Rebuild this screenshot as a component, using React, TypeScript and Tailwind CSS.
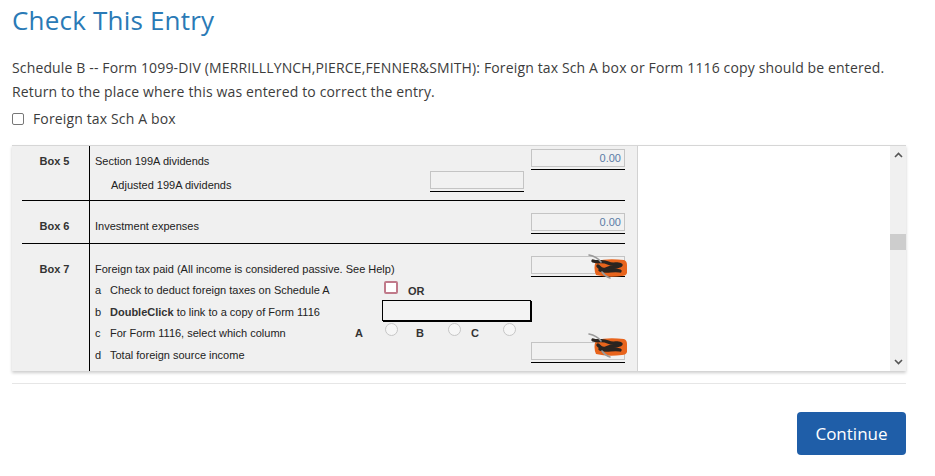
import React from 'react';

const Field: React.FC<{ w?: string; value?: string; children?: React.ReactNode }> = ({ w = 'w-[94px]', value, children }) => (
    <div className={`relative flex flex-col ${w}`}>
        <div className="h-[18px] border border-[#c4c4c4] bg-[#f1f1f1] flex items-center justify-end pr-[3px] text-[11px] text-[#5a7ca6]">
            {value}
        </div>
        <div className="mt-[2px] h-px bg-black" />
        {children}
    </div>
);

// redaction blob drawn over the amount
const Scribble: React.FC<{ top: string }> = ({ top }) => (
    <svg className={`absolute right-[-3px] ${top} w-[40px] h-[26px]`} viewBox="0 0 40 26">
        <path d="M8 7 Q20 4 36 6 Q39 7 39 11 L39 19 Q38 22 34 22 Q20 24 8 21 Q5 14 8 7 Z" fill="#e8641c" />
        <path d="M5 7 C10 9 14 6 20 9 C26 12 30 8 33 11 C30 14 24 12 18 15 C14 17 12 14 10 12 M12 16 C18 19 26 15 32 17" fill="none" stroke="#2a2420" strokeWidth="3.4" strokeLinecap="round" strokeLinejoin="round" />
        <path d="M1 1 C6 2 10 4 13 8 M14 18 C16 21 19 23 22 24" fill="none" stroke="#9a9a9a" strokeWidth="1.6" strokeLinecap="round" />
    </svg>
);

const Radio: React.FC = () => (
    <span className="block w-[13px] h-[13px] rounded-full border border-[#c6c6c6] bg-[#f6f6f6]" />
);

const ChevronUp: React.FC = () => (
    <svg className="w-[9px] h-[6px]" viewBox="0 0 9 6"><path d="M1 5 L4.5 1.5 L8 5" fill="none" stroke="#555" strokeWidth="1.6" /></svg>
);
const ChevronDown: React.FC = () => (
    <svg className="w-[9px] h-[6px]" viewBox="0 0 9 6"><path d="M1 1 L4.5 4.5 L8 1" fill="none" stroke="#555" strokeWidth="1.6" /></svg>
);

const Label: React.FC<{ children: React.ReactNode; pt: string }> = ({ children, pt }) => (
    <div className={`w-[68px] shrink-0 border-r border-black text-center font-bold text-[#333] pr-[2px] ${pt}`}>{children}</div>
);

export default function App() {
    return (
        <div className="w-[935px] h-[476px] bg-white px-3 text-[#3c3c3c] font-['Open_Sans',sans-serif] overflow-hidden">
            <h1 className="pt-[3px] text-[26px] leading-[34px] tracking-[0.2px] text-[#2a7ab6]">Check This Entry</h1>
            <p className="mt-[19px] text-[14px] leading-[24px] tracking-[0.14px]">
                Schedule B -- Form 1099-DIV (MERRILLLYNCH,PIERCE,FENNER&amp;SMITH): Foreign tax Sch A box or Form 1116 copy should be entered.
            </p>
            <p className="text-[14px] leading-[24px] tracking-[0.14px]">Return to the place where this was entered to correct the entry.</p>
            <label className="mt-[3px] flex items-center gap-[9px] text-[14px] leading-[24px] tracking-[0.14px]">
                <span className="w-[12px] h-[12px] rounded-[2px] border border-[#777] bg-white" />
                Foreign tax Sch A box
            </label>

            <div className="mt-[14px] w-[894px] h-[226px] flex border-t border-[#d6d6d6] shadow-[0_2px_3px_rgba(0,0,0,0.2)] font-['Liberation_Sans',Arial,sans-serif] text-[11px] text-[#222]">
                <div className="w-[626px] bg-[#f0f0f0] border-r border-[#d2d2d2] flex flex-col">
                    {/* Box 5 */}
                    <div className="ml-[10px] w-[603px] h-[55px] flex border-b border-black">
                        <Label pt="pt-[7px]">Box 5</Label>
                        <div className="flex-1 flex flex-col">
                            <div className="h-[24px] flex items-start justify-between pl-[5px]">
                                <span className="pt-[7px]">Section 199A dividends</span>
                                <div className="pt-[3px]"><Field value="0.00" /></div>
                            </div>
                            <div className="h-[24px] flex items-start pl-[21px]">
                                <span className="pt-[7px] w-[319px]">Adjusted 199A dividends</span>
                                <div className="pt-[1px]"><Field /></div>
                            </div>
                        </div>
                    </div>
                    {/* Box 6 */}
                    <div className="ml-[10px] w-[603px] h-[43px] flex border-b border-black">
                        <Label pt="pt-[17px]">Box 6</Label>
                        <div className="flex-1 flex items-start justify-between pl-[5px]">
                            <span className="pt-[17px]">Investment expenses</span>
                            <div className="pt-[12px]"><Field value="0.00" /></div>
                        </div>
                    </div>
                    {/* Box 7 */}
                    <div className="ml-[10px] w-[603px] flex-1 flex">
                        <Label pt="pt-[17px]">Box 7</Label>
                        <div className="flex-1 flex flex-col pl-[5px]">
                            <div className="h-[36px] flex items-start justify-between">
                                <span className="pt-[17px]">Foreign tax paid (All income is considered passive. See Help)</span>
                                <div className="pt-[12px]">
                                    <Field><Scribble top="top-[-2px]" /></Field>
                                </div>
                            </div>
                            <div className="h-[21px] flex items-center">
                                <span className="w-[10px]">a</span>
                                <span className="ml-[5px] w-[274px]">Check to deduct foreign taxes on Schedule A</span>
                                <span className="w-[14px] h-[13px] border-2 border-[#c07a8a] rounded-[2px] bg-white -mt-[6px]" />
                                <span className="ml-[10px] font-bold text-[#333] mt-[1px]">OR</span>
                            </div>
                            <div className="h-[22px] flex items-center">
                                <span className="w-[10px]">b</span>
                                <span className="ml-[5px] w-[272px]"><b className="text-[#333]">DoubleClick</b> to link to a copy of Form 1116</span>
                                <span className="w-[149px] h-[21px] border border-black bg-[#f3f3f3] shadow-[1px_1px_0_#000] -mt-[4px]" />
                            </div>
                            <div className="h-[21px] flex items-center">
                                <span className="w-[10px]">c</span>
                                <span className="ml-[5px] w-[245px]">For Form 1116, select which column</span>
                                <span className="w-[30px] font-bold text-[#333]">A</span>
                                <span className="-mt-[8px]"><Radio /></span>
                                <span className="ml-[18px] w-[32px] font-bold text-[#333]">B</span>
                                <span className="-mt-[8px]"><Radio /></span>
                                <span className="ml-[10px] w-[32px] font-bold text-[#333]">C</span>
                                <span className="-mt-[8px]"><Radio /></span>
                            </div>
                            <div className="h-[22px] flex items-start justify-between">
                                <span className="pt-[3px]"><span className="inline-block w-[15px]">d</span>Total foreign source income</span>
                                <div className="-mt-[2px]">
                                    <Field><Scribble top="-top-[9px]" /></Field>
                                </div>
                            </div>
                        </div>
                    </div>
                </div>
                <div className="flex-1 bg-white" />
                <div className="w-[16px] bg-[#f0f0f0] flex flex-col items-center justify-between py-[6px]">
                    <ChevronUp />
                    <div className="flex-1 w-full pt-[76px]">
                        <div className="h-[16px] w-full bg-[#cdcdcd]" />
                    </div>
                    <ChevronDown />
                </div>
            </div>

            <div className="mt-[12px] w-[894px] h-px bg-[#e6e6e6]" />

            <div className="w-[894px] flex justify-end mt-[28px]">
                <button className="w-[109px] h-[43px] rounded-[4px] bg-[#1f5ea8] text-white text-[17px]">Continue</button>
            </div>
        </div>
    );
}
